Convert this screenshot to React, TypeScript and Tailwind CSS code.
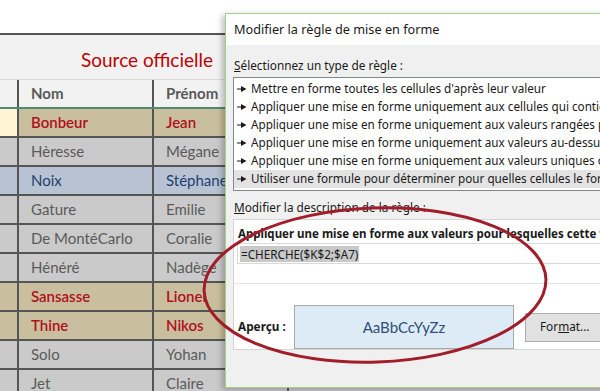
import React from "react";

type Row = { nom: string; prenom: string; kind: "tan" | "gray" | "blue"; cream?: boolean };

const rows: Row[] = [
  { nom: "Bonbeur", prenom: "Jean", kind: "tan", cream: true },
  { nom: "Hèresse", prenom: "Mégane", kind: "gray" },
  { nom: "Noix", prenom: "Stéphane", kind: "blue" },
  { nom: "Gature", prenom: "Emilie", kind: "gray" },
  { nom: "De MontéCarlo", prenom: "Coralie", kind: "gray" },
  { nom: "Hénéré", prenom: "Nadège", kind: "gray" },
  { nom: "Sansasse", prenom: "Lionel", kind: "tan" },
  { nom: "Thine", prenom: "Nikos", kind: "tan" },
  { nom: "Solo", prenom: "Yohan", kind: "gray" },
  { nom: "Jet", prenom: "Claire", kind: "gray" },
];

const bgFor = (k: Row["kind"]) =>
  k === "tan" ? "bg-[#c9bf9f]" : k === "blue" ? "bg-[#b7c3d2]" : "bg-[#cacaca]";
const textFor = (k: Row["kind"]) =>
  k === "tan" ? "text-[#b0101a] font-semibold" : k === "blue" ? "text-[#1f3f6e]" : "text-[#5a5a5a]";

const items = [
  "Mettre en forme toutes les cellules d'après leur valeur",
  "Appliquer une mise en forme uniquement aux cellules qui contiennent",
  "Appliquer une mise en forme uniquement aux valeurs rangées parmi les premières ou les dernières valeurs",
  "Appliquer une mise en forme uniquement aux valeurs au-dessus ou en dessous de la moyenne",
  "Appliquer une mise en forme uniquement aux valeurs uniques ou en double",
  "Utiliser une formule pour déterminer pour quelles cellules le format sera appliqué",
];

function Arrow() {
  return (
    <svg width="10" height="8" viewBox="0 0 10 8" className="shrink-0">
      <path d="M0 3.4 L4 3.4 L4 1 L9.5 4 L4 7 L4 4.6 L0 4.6 Z" fill="#1a1a1a" />
    </svg>
  );
}

export default function App() {
  const calibri = { fontFamily: "Lato, 'Open Sans', sans-serif" };
  return (
    <div className="relative w-[600px] h-[391px] overflow-hidden bg-white">
      {/* Spreadsheet */}
      <div style={calibri} className="flex flex-col">
        <div className="h-[33px] bg-white" />
        <div className="h-[46px] border-t-2 border-[#555] bg-[#f2f2f2] pl-[81px] flex items-center">
          <span className="text-[19px] text-[#c00000] leading-none pt-[5px]">Source officielle</span>
        </div>
        <div className="grid grid-cols-[19px_135px_135px_1fr] h-[30px] bg-[#f2f2f2] border-b-2 border-[#4f8a72] border-t border-t-[#d9d9d9]">
          <div className="border-r-2 border-[#555]" />
          <div className="border-r-2 border-[#555] flex items-center pl-[12px] text-[15px] font-bold text-[#595959]">Nom</div>
          <div className="border-r-2 border-[#555] flex items-center pl-[12px] text-[15px] font-bold text-[#595959]">Prénom</div>
          <div />
        </div>
        {rows.map((r, i) => (
          <div key={i} className={`grid grid-cols-[19px_135px_135px_1fr] h-[29px] border-b-2 border-[#555] ${bgFor(r.kind)}`}>
            <div className={`border-r-2 border-[#555] ${r.cream ? "bg-[#fff4d4]" : ""}`} />
            <div className={`border-r-2 border-[#555] flex items-center pl-[12px] text-[15px] whitespace-nowrap ${textFor(r.kind)}`}>{r.nom}</div>
            <div className={`border-r-2 border-[#555] flex items-center pl-[12px] text-[15px] whitespace-nowrap overflow-hidden ${textFor(r.kind)}`}>{r.prenom}</div>
            <div />
          </div>
        ))}
      </div>

      {/* Dialog */}
      <div
        className="absolute left-[225px] top-[13px] w-[420px] h-[375px] border border-[#a6cf86] bg-[#f0f0f0] shadow-[-3px_2px_6px_rgba(0,0,0,0.25)] flex flex-col"
        style={{ fontFamily: "'Noto Sans', 'Open Sans', sans-serif" }}
      >
        <div className="h-[31px] bg-white flex items-center pl-[8px] text-[12.7px] text-[#1a1a1a]">
          Modifier la règle de mise en forme
        </div>
        <div className="flex flex-col pl-[7px]">
          <div className="h-[32px] flex items-center pl-[1px] pt-[10px] text-[11.8px] text-[#1a1a1a]">
            <span><span className="underline">S</span>électionnez un type de règle :</span>
          </div>
          <div className="border border-[#828790] border-r-0 bg-white flex flex-col py-[2px]">
            {items.map((t, i) => (
              <div
                key={i}
                className={`h-[18px] flex items-center gap-[4px] pl-[3px] text-[11.7px] text-[#1a1a1a] whitespace-nowrap ${i === 5 ? "bg-[#e3e3e3]" : ""}`}
              >
                <Arrow />
                <span>{t}</span>
              </div>
            ))}
          </div>
          <div className="h-[27px] flex items-end pl-[1px] text-[11.8px] text-[#1a1a1a] pb-[1px]">
            <span><span className="underline">M</span>odifier la description de la règle :</span>
          </div>
          <div className="mt-[1px] h-[131px] border border-[#d5d5d5] border-r-0 bg-white flex flex-col">
            <div className="h-[22px] flex items-end pl-[4px] text-[11.5px] font-bold text-[#1a1a1a] whitespace-nowrap">
              Appliquer une mise en forme aux valeurs pour lesquelles cette formule est vraie :
            </div>
            <div className="ml-[3px] mt-[1px] h-[21px] border border-[#d9d9d9] border-r-0 flex items-center pl-[2px]">
              <span className="bg-[#c9c9c9] text-[11.7px] text-[#1a1a1a] leading-[16px] px-[1px]">=CHERCHE($K$2;$A7)</span>
            </div>
            <div className="mt-[19px] border-t border-[#e3e3e3]" />
            <div className="flex items-center mt-[21px]">
              <div className="w-[60px] pl-[4px] text-[11.8px] font-bold text-[#1a1a1a]">Aperçu :</div>
              <div className="w-[220px] h-[44px] border border-[#a9a9a9] bg-[#ddebf7] flex items-center justify-center text-[15px] text-[#2f4f7a]" style={calibri}>
                AaBbCcYyZz
              </div>
              <div className="ml-[11px] w-[100px] h-[29px] border border-[#adadad] bg-[#e1e1e1] flex items-center pl-[14px] text-[11.8px] text-[#1a1a1a]">
                <span>For<span className="underline">m</span>at...</span>
              </div>
            </div>
          </div>
        </div>
      </div>

      {/* Red ellipse annotation */}
      <svg className="absolute left-0 top-0 pointer-events-none" width="600" height="391" viewBox="0 0 600 391">
        <ellipse cx="375" cy="285" rx="171" ry="77" fill="none" stroke="#a11d29" strokeWidth="3" transform="rotate(-2 375 285)" />
      </svg>
    </div>
  );
}
